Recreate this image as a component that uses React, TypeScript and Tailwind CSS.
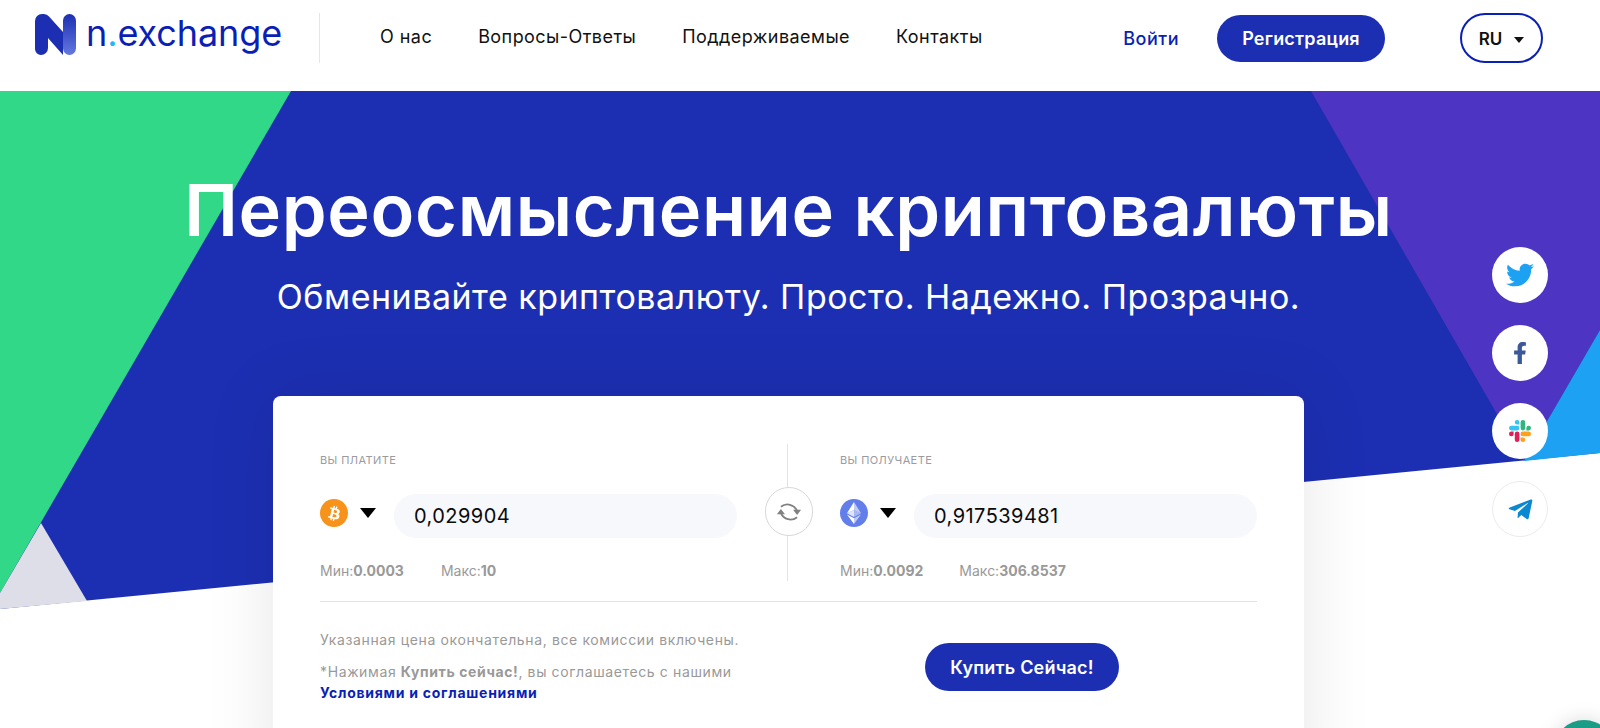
import { FaBtc, FaFacebookF, FaTelegramPlane, FaTwitter } from 'react-icons/fa';

const NAV = ['О нас', 'Вопросы-Ответы', 'Поддерживаемые', 'Контакты'];

const Logo = () => (
  <svg width="41" height="41" viewBox="0 0 41 41" className="shrink-0">
    <defs>
      <linearGradient id="logo-bar" x1="0" y1="0" x2="0" y2="1">
        <stop offset="0" stopColor="#1c2fb2" />
        <stop offset="1" stopColor="#6478e0" />
      </linearGradient>
    </defs>
    <path
      d="M0 7 a7 7 0 0 1 7 -7 h2 a7 7 0 0 1 5 2.5 L28 18 V41 L13 24 V34 a7 7 0 0 1 -7 7 a6 6 0 0 1 -6 -6 z"
      fill="#1c2fb2"
    />
    <rect x="28" y="0" width="13" height="41" rx="6.5" fill="url(#logo-bar)" />
  </svg>
);

const SlackIcon = () => (
  <svg width="22" height="22" viewBox="0 0 24 24">
    <path fill="#E01E5A" d="M5.042 15.165a2.528 2.528 0 0 1-2.52 2.523A2.528 2.528 0 0 1 0 15.165a2.527 2.527 0 0 1 2.522-2.52h2.52v2.52zM6.313 15.165a2.527 2.527 0 0 1 2.521-2.52 2.527 2.527 0 0 1 2.521 2.52v6.313A2.528 2.528 0 0 1 8.834 24a2.528 2.528 0 0 1-2.521-2.522v-6.313z" />
    <path fill="#36C5F0" d="M8.834 5.042a2.528 2.528 0 0 1-2.521-2.52A2.528 2.528 0 0 1 8.834 0a2.528 2.528 0 0 1 2.521 2.522v2.52H8.834zM8.834 6.313a2.528 2.528 0 0 1 2.521 2.521 2.528 2.528 0 0 1-2.521 2.521H2.522A2.528 2.528 0 0 1 0 8.834a2.528 2.528 0 0 1 2.522-2.521h6.312z" />
    <path fill="#2EB67D" d="M18.956 8.834a2.528 2.528 0 0 1 2.522-2.521A2.528 2.528 0 0 1 24 8.834a2.528 2.528 0 0 1-2.522 2.521h-2.522V8.834zM17.688 8.834a2.528 2.528 0 0 1-2.523 2.521 2.527 2.527 0 0 1-2.52-2.521V2.522A2.527 2.527 0 0 1 15.165 0a2.528 2.528 0 0 1 2.523 2.522v6.312z" />
    <path fill="#FF9F1C" d="M15.165 18.956a2.528 2.528 0 0 1 2.523 2.522A2.528 2.528 0 0 1 15.165 24a2.527 2.527 0 0 1-2.52-2.522v-2.522h2.52zM15.165 17.688a2.527 2.527 0 0 1-2.52-2.523 2.526 2.526 0 0 1 2.52-2.52h6.313A2.527 2.527 0 0 1 24 15.165a2.528 2.528 0 0 1-2.522 2.523h-6.313z" />
  </svg>
);

const EthIcon = () => (
  <div className="w-7 h-7 rounded-full bg-[#627eea] flex items-center justify-center shrink-0 -mt-[6px]">
    <svg width="14" height="22" viewBox="0 0 14 22">
      <path d="M7 0 L7 8 L14 11.2 z" fill="#ffffff" fillOpacity="0.6" />
      <path d="M7 0 L0 11.2 L7 8 z" fill="#ffffff" />
      <path d="M7 8 L0 11.2 L7 15 z" fill="#ffffff" fillOpacity="0.8" />
      <path d="M7 8 L14 11.2 L7 15 z" fill="#ffffff" fillOpacity="0.45" />
      <path d="M7 16.3 L7 22 L14 12.5 z" fill="#ffffff" fillOpacity="0.6" />
      <path d="M7 16.3 L0 12.5 L7 22 z" fill="#ffffff" />
    </svg>
  </div>
);

const BtcIcon = () => (
  <div className="w-7 h-7 rounded-full bg-[#f7931a] flex items-center justify-center shrink-0 -mt-[6px]">
    <FaBtc className="text-white text-[15px] rotate-[14deg]" />
  </div>
);

const Arrow = () => <span className="ml-[12px] -mt-[6px] w-0 h-0 border-x-[8px] border-x-transparent border-t-[10px] border-t-black shrink-0" />;

const Side = ({ label, icon, value, min, max, gap }: { label: string; icon: React.ReactNode; value: string; min: string; max: string; gap: string }) => (
  <div className="w-[417px]">
    <div className="text-[11px] leading-[14px] text-[#9a9a9f] tracking-[0.4px]">{label}</div>
    <div className="flex items-center mt-[27px]">
      {icon}
      <Arrow />
      <div className="ml-[18px] flex-1 h-[44px] rounded-[22px] bg-[#f7f8fc] flex items-center pl-[20px] text-[20px] tracking-[0.45px] text-[#0b0b0b]">{value}</div>
    </div>
    <div className="flex mt-[24px] text-[14px] leading-[17px] text-[#999]">
      <span className={gap}>Мин:<b className="font-bold">{min}</b></span>
      <span>Макс:<b className="font-bold">{max}</b></span>
    </div>
  </div>
);

const SwapIcon = () => (
  <svg width="30" height="26" viewBox="0 0 26 22" fill="none">
    <path d="M6 6.5 A9 9 0 0 1 20 10" stroke="#808080" strokeWidth="1.6" />
    <path d="M20 15.5 A9 9 0 0 1 6 12" stroke="#808080" strokeWidth="1.6" />
    <path d="M16.5 9 h7 l-3.5 4.5 z" fill="#808080" />
    <path d="M2.5 13 h7 l-3.5 -4.5 z" fill="#808080" />
  </svg>
);

const Social = ({ children, outlined }: { children: React.ReactNode; outlined?: boolean }) => (
  <a className={`w-[56px] h-[56px] rounded-full bg-white flex items-center justify-center ${outlined ? 'border border-[#e8ebf3]' : ''}`}>
    {children}
  </a>
);

export default function App() {
  return (
    <div className="relative h-[728px] overflow-hidden bg-white font-['Inter',sans-serif]">
      <header className="h-[91px] flex items-start">
        <div className="flex items-center gap-[10px] ml-[35px] mt-[14px] w-[284px]">
          <Logo />
          <span className="text-[36px] leading-[38px] -mt-[3px] text-[#0a1fb5] tracking-[-0.1px]">
            n<span className="text-[#29b6f6]">.</span>exchange
          </span>
        </div>
        <div className="w-px h-[50px] bg-[#e6e6e6] mt-[13px]" />
        <nav className="flex gap-[46px] ml-[60px] mt-[26px] text-[18px] leading-[22px] tracking-[0.45px] text-[#111]">
          {NAV.map((item) => (
            <a key={item}>{item}</a>
          ))}
        </nav>
        <div className="ml-auto flex items-start mr-[57px]">
          <a className="mt-[28px] text-[18px] leading-[22px] font-medium tracking-[0.5px] text-[#0a1fb5]">Войти</a>
          <a className="ml-[38px] mt-[15px] w-[168px] h-[47px] rounded-full bg-[#1c2fb2] text-white text-[18px] font-semibold tracking-[0.2px] flex items-center justify-center">
            Регистрация
          </a>
          <button className="ml-[75px] mt-[13px] w-[83px] h-[50px] rounded-full border-2 border-[#0a1fb5] flex items-center justify-center gap-[12px] pt-[3px] text-[17px] font-semibold text-[#111]">
            RU
            <span className="w-0 h-0 border-x-[5px] border-x-transparent border-t-[6px] border-t-[#111]" />
          </button>
        </div>
      </header>

      <section className="relative h-[637px]">
        <svg className="absolute inset-0" width="1600" height="637" viewBox="0 91 1600 637">
          <path d="M0 91 H1600 V453 L0 609 z" fill="#1c2fb2" />
          <path d="M0 91 H291 L0 593 z" fill="#31d887" />
          <path d="M41 523 L87 601 L0 609 V593 z" fill="#dedee8" />
          <path d="M1311 91 H1600 V330 L1524 461 z" fill="#4e34c2" />
          <path d="M1600 330 L1524 461 L1600 453 z" fill="#1da1f2" />
        </svg>
        <div className="relative flex flex-col items-center">
          <h1 className="mt-[71px] -ml-[23px] text-[72px] leading-[96px] font-semibold text-white tracking-[0.65px] whitespace-nowrap">
            Переосмысление криптовалюты
          </h1>
          <p className="mt-[16px] -ml-[23px] text-[34px] leading-[46px] text-white tracking-[0.5px] whitespace-nowrap">
            Обменивайте криптовалюту. Просто. Надежно. Прозрачно.
          </p>
          <div className="mt-[76px] -ml-[23px] w-[1031px] h-[400px] rounded-[8px] bg-white px-[47px] pt-[57px] shadow-[0_0_70px_rgba(0,0,0,0.1)]">
            <div className="relative flex justify-between">
              <Side label="ВЫ ПЛАТИТЕ" icon={<BtcIcon />} value="0,029904" min="0.0003" max="10" gap="mr-[37px]" />
              <Side label="ВЫ ПОЛУЧАЕТЕ" icon={<EthIcon />} value="0,917539481" min="0.0092" max="306.8537" gap="mr-[36px]" />
              <div className="absolute left-[467px] -top-[9px] h-[137px] w-px bg-[#e0e3ea]" />
              <div className="absolute left-[445px] top-[34px] w-[48px] h-[49px] rounded-full bg-white border border-[#d8d8d8] flex items-center justify-center">
                <SwapIcon />
              </div>
            </div>
            <div className="h-px bg-[#e4e4e4] mt-[22px]" />
            <div className="flex mt-[29px]">
              <div className="w-[605px] text-[14px] text-[#999] tracking-[0.62px]">
                <p className="leading-[18px]">Указанная цена окончательна, все комиссии включены.</p>
                <p className="leading-[18px] mt-[14px]">
                  *Нажимая <b className="font-bold">Купить сейчас!</b>, вы соглашаетесь с нашими
                </p>
                <a className="block leading-[18px] mt-[3px] font-bold tracking-[0.75px] text-[#0a1fb5]">Условиями и соглашениями</a>
              </div>
              <button className="mt-[12px] w-[194px] h-[48px] rounded-full bg-[#1c2fb2] text-white text-[18px] font-semibold tracking-[0.2px] flex items-center justify-center">
                Купить Сейчас!
              </button>
            </div>
          </div>
        </div>
      </section>

      <aside className="absolute left-[1492px] top-[247px] flex flex-col gap-[22px]">
        <Social><FaTwitter className="text-[#1da1f2] text-[28px]" /></Social>
        <Social><FaFacebookF className="text-[#3b5998] text-[22px]" /></Social>
        <Social><SlackIcon /></Social>
        <Social outlined><FaTelegramPlane className="text-[#0a88d2] text-[27px]" /></Social>
      </aside>

      <div className="absolute left-[1554px] top-[720px] w-[60px] h-[60px] rounded-full bg-[#1a9c87] shadow-[0_0_20px_rgba(0,0,0,0.15)]" />
    </div>
  );
}
